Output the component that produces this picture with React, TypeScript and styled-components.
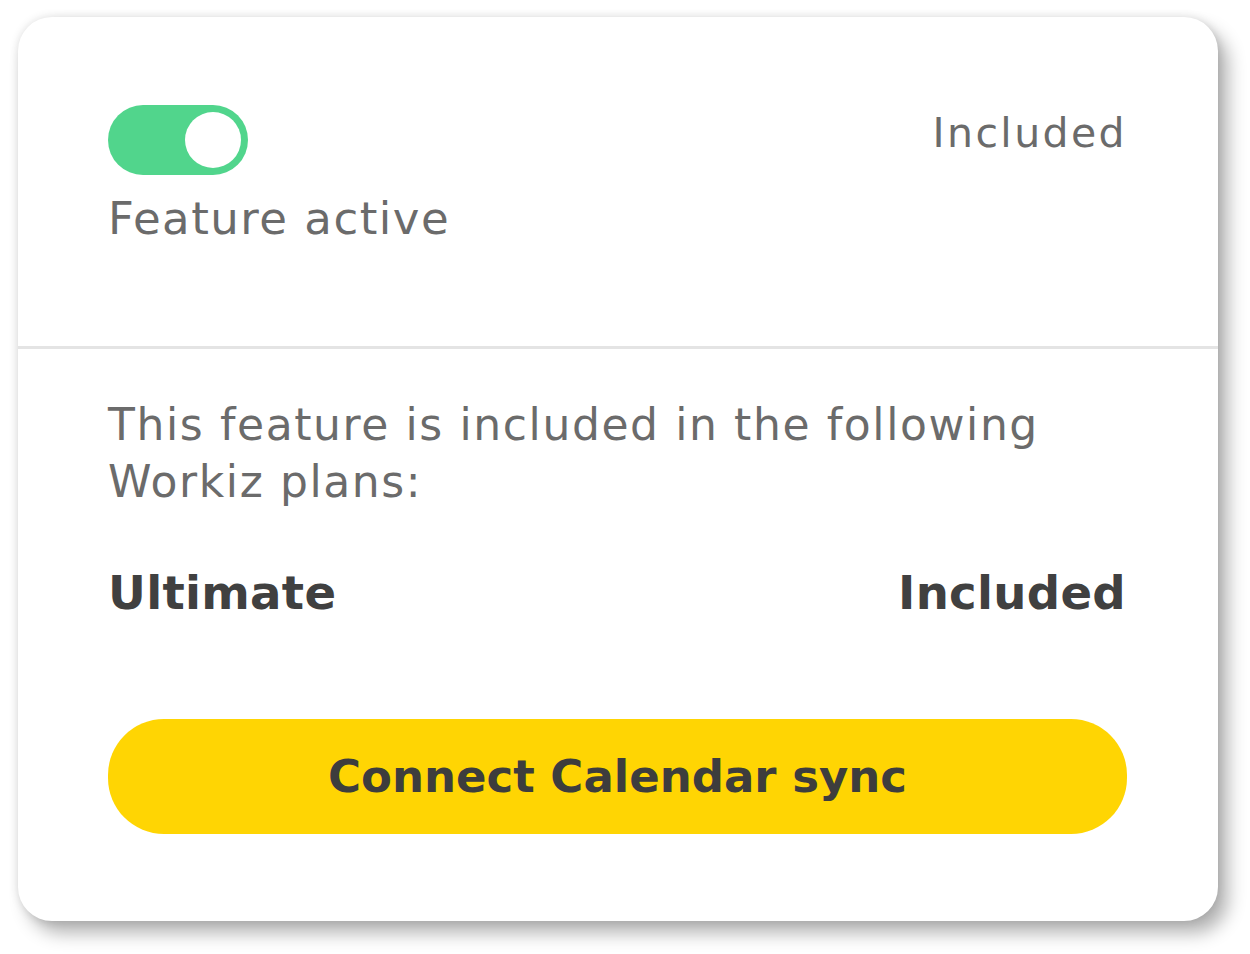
import React from "react";
import styled, { createGlobalStyle } from "styled-components";

const GlobalStyle = createGlobalStyle`
  html, body {
    margin: 0;
    padding: 0;
    background: #ffffff;
  }
  body {
    font-family: "DejaVu Sans", "Liberation Sans", sans-serif;
    color: #6a6a6a;
  }
`;

const Page = styled.div`
  padding: 17px 32px 33px 18px;
  min-height: 954px;
  box-sizing: border-box;
`;

const Card = styled.div`
  width: 1200px;
  height: 904px;
  box-sizing: border-box;
  background: #ffffff;
  border-radius: 34px;
  box-shadow: 10px 12px 18px rgba(0, 0, 0, 0.3), 0 0 10px rgba(0, 0, 0, 0.12);
  display: flex;
  flex-direction: column;
  overflow: hidden;
`;

const StatusSection = styled.section`
  padding: 88px 91px 0 90px;
  height: 332px;
  box-sizing: border-box;
  border-bottom: 3px solid #e4e4e4;
`;

const StatusRow = styled.div`
  display: flex;
  justify-content: space-between;
  align-items: flex-start;
`;

const Toggle = styled.div<{ on: boolean }>`
  width: 140px;
  height: 70px;
  border-radius: 35px;
  background: ${(p) => (p.on ? "#51d58c" : "#cfcfcf")};
  display: flex;
  align-items: center;
  justify-content: ${(p) => (p.on ? "flex-end" : "flex-start")};
  padding: 0 7px;
  box-sizing: border-box;
`;

const Knob = styled.span`
  width: 56px;
  height: 56px;
  border-radius: 50%;
  background: #ffffff;
`;

const StatusLabel = styled.div`
  font-size: 41px;
  letter-spacing: 2.4px;
  color: #6b6b6b;
  margin-top: 4px;
`;

const ActiveLabel = styled.div`
  font-size: 45px;
  letter-spacing: 1.5px;
  color: #6b6b6b;
  margin-top: 17px;
`;

const PlansSection = styled.section`
  flex: 1;
  display: flex;
  flex-direction: column;
  padding: 47px 91px 87px 90px;
`;

const Description = styled.p`
  margin: 0;
  font-size: 44px;
  line-height: 57px;
  letter-spacing: 1.6px;
  color: #6b6b6b;
`;

const PlanRow = styled.div`
  display: flex;
  justify-content: space-between;
  margin-top: 56px;
  font-size: 46.6px;
  font-weight: 700;
  letter-spacing: 0.3px;
  color: #404040;
  padding-right: 1px;
`;

const ConnectButton = styled.button`
  margin-top: auto;
  height: 115px;
  width: 100%;
  border: none;
  border-radius: 56px;
  background: #ffd503;
  font-family: "DejaVu Sans", "Liberation Sans", sans-serif;
  font-size: 45px;
  font-weight: 700;
  color: #3d3d3d;
  display: flex;
  align-items: center;
  justify-content: center;
  cursor: pointer;
  padding: 0;
`;

export default function App() {
  return (
    <Page>
      <GlobalStyle />
      <Card>
        <StatusSection>
          <StatusRow>
            <Toggle on>
              <Knob />
            </Toggle>
            <StatusLabel>Included</StatusLabel>
          </StatusRow>
          <ActiveLabel>Feature active</ActiveLabel>
        </StatusSection>
        <PlansSection>
          <Description>
            This feature is included in the following Workiz plans:
          </Description>
          <PlanRow>
            <span>Ultimate</span>
            <span>Included</span>
          </PlanRow>
          <ConnectButton>Connect Calendar sync</ConnectButton>
        </PlansSection>
      </Card>
    </Page>
  );
}
